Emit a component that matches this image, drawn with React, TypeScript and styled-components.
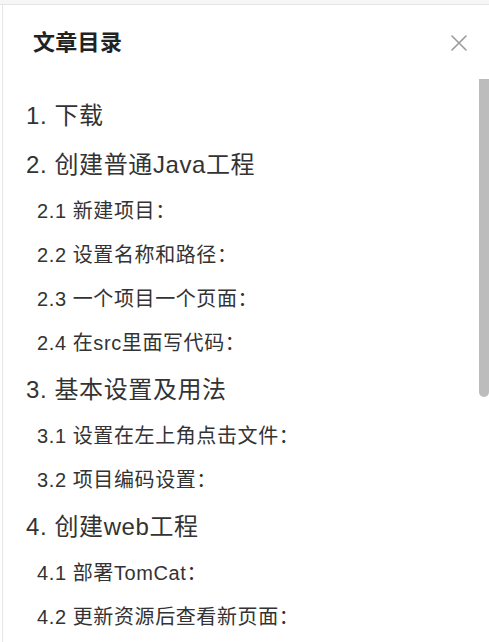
import React from 'react';
import styled, { createGlobalStyle } from 'styled-components';

const GlobalStyle = createGlobalStyle`
  html, body {
    margin: 0;
    padding: 0;
    background: #ffffff;
  }
  body {
    font-family: "Liberation Sans", "Noto Sans CJK SC", sans-serif;
  }
`;

type TocItem = {
  level: 1 | 2;
  text: string;
};

const TOC: TocItem[] = [
  { level: 1, text: '1. 下载' },
  { level: 1, text: '2. 创建普通Java工程' },
  { level: 2, text: '2.1 新建项目：' },
  { level: 2, text: '2.2 设置名称和路径：' },
  { level: 2, text: '2.3 一个项目一个页面：' },
  { level: 2, text: '2.4 在src里面写代码：' },
  { level: 1, text: '3. 基本设置及用法' },
  { level: 2, text: '3.1 设置在左上角点击文件：' },
  { level: 2, text: '3.2 项目编码设置：' },
  { level: 1, text: '4. 创建web工程' },
  { level: 2, text: '4.1 部署TomCat：' },
  { level: 2, text: '4.2 更新资源后查看新页面：' },
];

const Page = styled.div`
  display: flex;
  flex-direction: column;
  height: 642px;
  overflow: hidden;
`;

const TopStrip = styled.div`
  height: 4px;
  flex-shrink: 0;
  background: #f6f6f6;
  border-bottom: 1px solid #e6e6e6;
`;

const Panel = styled.aside`
  flex: 1;
  display: flex;
  flex-direction: column;
  margin-left: 2px;
  border-left: 1px solid #e6e6e6;
  background: #ffffff;
  min-height: 0;
`;

const Header = styled.div`
  height: 74px;
  flex-shrink: 0;
  display: flex;
  align-items: center;
  justify-content: space-between;
  padding: 0 21px 0 30px;
`;

const Title = styled.h3`
  margin: 0 0 5px 0;
  font-size: 22px;
  font-weight: 700;
  color: #222222;
  letter-spacing: 0.3px;
`;

const CloseButton = styled.button`
  display: flex;
  align-items: center;
  justify-content: center;
  width: 18px;
  height: 18px;
  margin-top: 1px;
  padding: 0;
  border: none;
  background: transparent;
  cursor: pointer;
`;

const ListArea = styled.div`
  position: relative;
  flex: 1;
  overflow: hidden;
`;

const List = styled.ul`
  list-style: none;
  margin: 0;
  padding: 10px 0 0 0;
`;

const Entry = styled.li<{ $level: 1 | 2 }>`
  height: ${({ $level }) => ($level === 1 ? 49 : 44)}px;
  display: flex;
  align-items: center;
  padding-left: ${({ $level }) => ($level === 1 ? 23 : 34)}px;
  font-size: ${({ $level }) => ($level === 1 ? 24 : 20)}px;
  letter-spacing: 0.6px;
  color: #333333;
  white-space: nowrap;
  cursor: pointer;
`;

// thin overlay thumb, sits on top of the list like a native overlay scrollbar
const ScrollThumb = styled.div`
  position: absolute;
  top: -5px;
  right: 0;
  width: 10px;
  height: 323px;
  border-radius: 5px;
  background: #bcbcbc;
`;

function CloseIcon() {
  return (
    <svg width="16" height="16" viewBox="0 0 16 16" fill="none">
      <path d="M1 1L15 15M15 1L1 15" stroke="#9a9a9a" strokeWidth="1.6" strokeLinecap="round" />
    </svg>
  );
}

function App() {
  return (
    <>
      <GlobalStyle />
      <Page>
        <TopStrip />
        <Panel>
          <Header>
            <Title>文章目录</Title>
            <CloseButton aria-label="关闭">
              <CloseIcon />
            </CloseButton>
          </Header>
          <ListArea>
            <List>
              {TOC.map((item) => (
                <Entry key={item.text} $level={item.level}>
                  {item.text}
                </Entry>
              ))}
            </List>
            <ScrollThumb />
          </ListArea>
        </Panel>
      </Page>
    </>
  );
}

export default App;
